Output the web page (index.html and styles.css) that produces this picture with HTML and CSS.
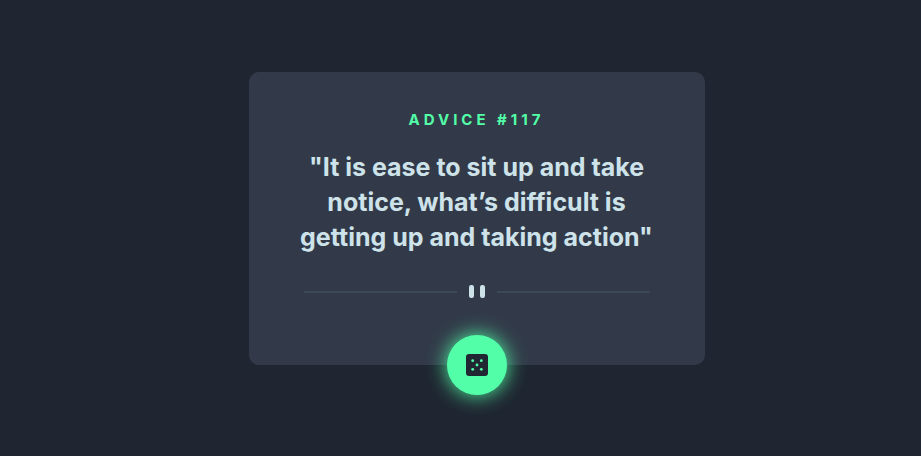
FILE: index.html
```html
<!DOCTYPE html>
<html lang="en">
<head>
<meta charset="utf-8">
<title>Advice generator</title>
<link rel="stylesheet" href="styles.css">
</head>
<body>
<main class="card">
  <h1 class="label">ADVICE #117</h1>
  <p class="quote">"It is ease to sit up and take notice, what’s difficult is getting up and taking action"</p>
  <div class="divider">
    <svg width="16" height="14" viewBox="0 0 16 14" fill="#cee3e9" aria-hidden="true"><rect width="5" height="13" rx="2.200"/><rect x="11" width="5" height="13" rx="2.200"/></svg>
  </div>
  <button class="dice" type="button" aria-label="New advice">
    <svg width="22" height="22" viewBox="0 0 22 22" aria-hidden="true"><rect width="22" height="22" rx="3" fill="#202733"/><g fill="#52ffa8"><circle cx="6.700" cy="6.700" r="1.400"/><circle cx="15.300" cy="6.700" r="1.400"/><circle cx="11" cy="11" r="1.400"/><circle cx="6.700" cy="15.300" r="1.400"/><circle cx="15.300" cy="15.300" r="1.400"/></g></svg>
  </button>
</main>
</body>
</html>
```
FILE: styles.css
```css
* { box-sizing: border-box; }
body {
  margin: 0;
  min-height: 100vh;
  padding: 72px 16px 61px 48px;
  background: #1f2631;
  font-family: Inter, sans-serif;
}
.card {
  display: flex;
  flex-direction: column;
  align-items: center;
  max-width: 456px;
  margin: 0 auto;
  padding: 36px 40px 0;
  border-radius: 10px;
  background: #323a49;
  text-align: center;
}
.label {
  margin: 0;
  color: #52ffa8;
  font-size: 15px;
  line-height: 24px;
  font-weight: 700;
  letter-spacing: 4px;
}
.quote {
  margin: 18px 0 0;
  color: #cee3e9;
  font-size: 25px;
  line-height: 35px;
  font-weight: 700;
}
.divider {
  display: flex;
  align-items: center;
  gap: 12px;
  width: 100%;
  max-width: 346px;
  margin-top: 30px;
}
.divider::before,
.divider::after {
  content: "";
  flex: 1;
  height: 2px;
  background: #3d4859;
}
.dice {
  display: grid;
  place-items: center;
  width: 60px;
  height: 60px;
  margin: 36px 0 -30px;
  padding: 0;
  border: 0;
  border-radius: 50%;
  background: #52ffa8;
  box-shadow: 0 0 20px #52ffa8;
  cursor: pointer;
}
```
